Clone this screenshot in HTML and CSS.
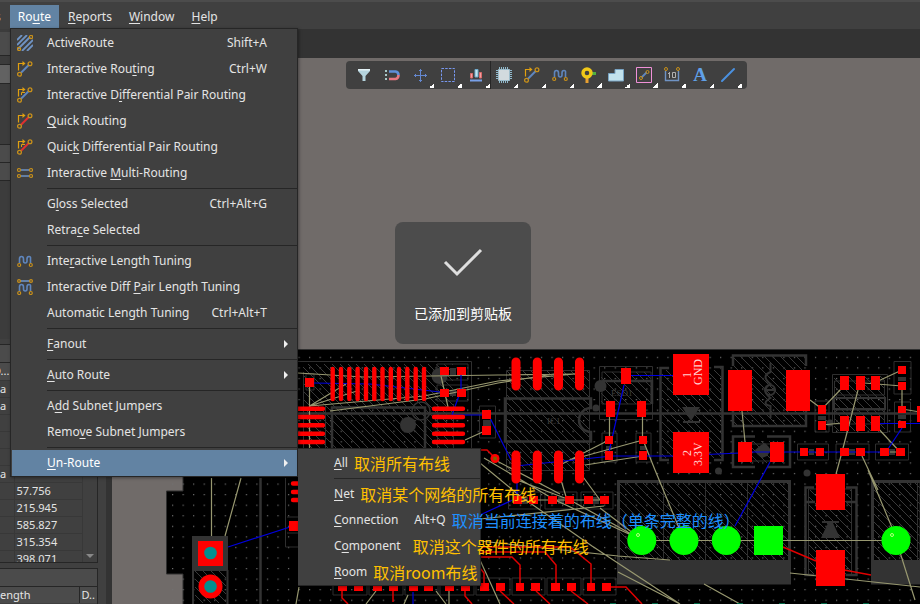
FILE: index.html
```html
<!DOCTYPE html>
<html lang="en">
<head>
<meta charset="utf-8">
<title>PCB Editor</title>
<link rel="stylesheet" href="styles.css">
</head>
<body>
<svg class="defs" aria-hidden="true">
  <defs>
    <symbol id="i-route" viewBox="0 0 16 16"><path d="M1.500 9.500V2.500H6" stroke="#e0a010" stroke-width="1.200"/><path d="M5.500 0l3 2.500-3 2.500z" fill="#e0a010"/><path d="M4 11.700l7.500-7.500" stroke="#5f86bd" stroke-width="2"/><circle cx="2.500" cy="13.200" r="1.900" stroke="#c8901a" stroke-width="1.300"/><circle cx="13" cy="2.800" r="1.900" stroke="#c8901a" stroke-width="1.300"/></symbol>
    <symbol id="i-quick" viewBox="0 0 16 16"><path d="M1.500 9.500V2.500H6" stroke="#e0a010" stroke-width="1.200"/><path d="M5.500 0l3 2.500-3 2.500z" fill="#e0a010"/><path d="M4 11.700l7.500-7.500" stroke="#e03030" stroke-width="2"/><circle cx="2.500" cy="13.200" r="1.900" stroke="#c8901a" stroke-width="1.300"/><circle cx="13" cy="2.800" r="1.900" stroke="#c8901a" stroke-width="1.300"/></symbol>
    <symbol id="i-wave" viewBox="0 0 16 16"><path d="M2.500 10V6q0-2.500 2-2.500T6.500 6V8q0 2 1.750 2T10 8V6q0-2.500 2-2.500T13.500 6V10" stroke="#5f86bd" stroke-width="1.600"/><circle cx="2.200" cy="12" r="1.500" stroke="#c8901a" stroke-width="1.200"/><circle cx="13.800" cy="12" r="1.500" stroke="#c8901a" stroke-width="1.200"/></symbol>
  </defs>
</svg>
<div class="app">
  <nav class="menubar">
    <button class="menubar-item cut">s</button>
    <button class="menubar-item open">Ro<u>u</u>te</button>
    <button class="menubar-item"><u>R</u>eports</button>
    <button class="menubar-item"><u>W</u>indow</button>
    <button class="menubar-item"><u>H</u>elp</button>

    <ul class="menu">
      <li><button><svg class="ico" viewBox="0 0 16 16"><path d="M0 5l5-5M0 10L10 0M1 14L13 2M5 16L16 5M10 16l6-6" stroke="#6f93c4" stroke-width="1.800"/><circle cx="2" cy="14" r="1.600" stroke="#c8901a" stroke-width="1.200"/><circle cx="14" cy="2" r="1.600" stroke="#c8901a" stroke-width="1.200"/></svg><span>ActiveRoute</span><kbd>Shift+A</kbd></button></li>
      <li><button><svg class="ico"><use href="#i-route"/></svg><span>Interactive Rou<u>t</u>ing</span><kbd>Ctrl+W</kbd></button></li>
      <li><button><svg class="ico" viewBox="0 0 16 16"><use href="#i-route"/><path d="M4.500 8V5.500H8" stroke="#e0a010"/></svg><span>Interactive D<u>i</u>fferential Pair Routing</span></button></li>
      <li><button><svg class="ico"><use href="#i-quick"/></svg><span><u>Q</u>uick Routing</span></button></li>
      <li><button><svg class="ico" viewBox="0 0 16 16"><use href="#i-quick"/><path d="M4.500 8V5.500H8" stroke="#e0a010"/></svg><span>Quic<u>k</u> Differential Pair Routing</span></button></li>
      <li><button><svg class="ico" viewBox="0 0 16 16"><path d="M4 5h8M4 11h8" stroke="#6f93c4" stroke-width="1.600"/><g stroke="#c8901a" stroke-width="1.200"><circle cx="2" cy="5" r="1.500"/><circle cx="14" cy="5" r="1.500"/><circle cx="2" cy="11" r="1.500"/><circle cx="14" cy="11" r="1.500"/></g></svg><span>Interactive <u>M</u>ulti-Routing</span></button></li>
      <li class="sep"></li>
      <li><button><span>G<u>l</u>oss Selected</span><kbd>Ctrl+Alt+G</kbd></button></li>
      <li><button><span>Retra<u>c</u>e Selected</span></button></li>
      <li class="sep"></li>
      <li><button><svg class="ico"><use href="#i-wave"/></svg><span>Inte<u>r</u>active Length Tuning</span></button></li>
      <li><button><svg class="ico" viewBox="0 0 16 16"><use href="#i-wave" y="2" width="16" height="16"/><path d="M3 2h10" stroke="#6f93c4" stroke-width="1.600"/><circle cx="2" cy="2" r="1.400" stroke="#c8901a" stroke-width="1.200"/><circle cx="14" cy="2" r="1.400" stroke="#c8901a" stroke-width="1.200"/></svg><span>Interactive Diff <u>P</u>air Length Tuning</span></button></li>
      <li><button><span>Automatic Length Tuning</span><kbd>Ctrl+Alt+T</kbd></button></li>
      <li class="sep"></li>
      <li><button class="more"><span><u>F</u>anout</span></button></li>
      <li class="sep"></li>
      <li><button class="more"><span><u>A</u>uto Route</span></button></li>
      <li class="sep"></li>
      <li><button><span>A<u>d</u>d Subnet Jumpers</span></button></li>
      <li><button><span>Remo<u>v</u>e Subnet Jumpers</span></button></li>
      <li class="sep"></li>
      <li class="parent"><button class="more active"><span><u>U</u>n-Route</span></button>
        <ul class="submenu">
          <li><button><span><u>A</u>ll</span><em>取消所有布线</em></button></li>
          <li class="sep"></li>
          <li><button><span><u>N</u>et</span><em>取消某个网络的所有布线</em></button></li>
          <li><button><span><u>C</u>onnection</span><kbd>Alt+Q</kbd><em class="blue">取消当前连接着的布线（单条完整的线）</em></button></li>
          <li><button class="wide"><span>C<u>o</u>mponent</span><em>取消这个器件的所有布线</em></button></li>
          <li><button><span><u>R</u>oom</span><em>取消room布线</em></button></li>
        </ul>
      </li>
    </ul>
  </nav>

  <div class="workspace">
    <aside class="panel">
      <div class="panel-top">
        <div class="bar"></div>
        <div class="field"></div>
        <div class="blank"></div>
        <div class="bar"></div>
        <div class="bar"></div>
      </div>
      <div class="panel-list">
        <div class="bar"></div>
        <div class="list-body">
          <table>
            <thead><tr><th>D...</th><th></th></tr></thead>
            <tbody>
              <tr><td>a</td><td></td></tr>
              <tr><td>a</td><td></td></tr>
              <tr><td></td><td></td></tr>
              <tr><td></td><td></td></tr>
              <tr><td></td><td></td></tr>
              <tr><td>a</td><td></td></tr>
              <tr><td></td><td>57.756</td></tr>
              <tr><td></td><td>215.945</td></tr>
              <tr><td></td><td>585.827</td></tr>
              <tr><td></td><td>315.354</td></tr>
              <tr><td></td><td>398.071</td></tr>
            </tbody>
          </table>
          <div class="scroll"><i></i></div>
        </div>
      </div>
      <div class="panel-foot">
        <div class="bar"></div>
        <div class="foot-head"><span>ength</span><span class="last">D..</span></div>
      </div>
    </aside>

    <main class="editor">
      <div class="tabs"></div>
      <div class="canvas">
        <svg class="board" viewBox="112 58 808 546" preserveAspectRatio="xMinYMin slice">
          <defs>
            <pattern id="dots" x="172" y="483.500" width="10.540" height="10.560" patternUnits="userSpaceOnUse"><rect width="1.200" height="1.200" fill="#707070"/></pattern>
            <pattern id="hatch" width="8" height="8" patternUnits="userSpaceOnUse"><path d="M-1 -1L9 9M-1 7L1 9M7 -1L9 1" stroke="#3a3a3a" stroke-width="1"/></pattern>
          </defs>
          <path d="M183 349.500H921V605H183V574H166.500V491H183Z" fill="#000" stroke="#303030"/>
          <path d="M167 351H920V604H167Z" fill="url(#dots)"/>

          <g fill="url(#hatch)" stroke="none">
            <path d="M303 364h150v84H303zM507 370h82v100h-82zM601 372h50v32h-50zM662 370h60v88h-60zM733 356h72v70h-72zM834 376h51v55h-51zM738 441h46v22h-46zM620 483h168v78H620zM808 490h44v84h-44zM874 483h46v78h-46zM195 571h31v32h-31z"/>
          </g>
          <g fill="none" stroke="#2f2f2f" stroke-width="1">
            <path d="M298 361.500H471.500V448M303.500 372V448M325.500 404V448M437.500 404V448M453.500 404V448"/>
            <path d="M306 374h8v16h-8zM437 364h31v16h-31zM437 385h31v16h-31zM479.500 406h16v32h-16z"/>
            <path d="M506.500 370.500h83v100h-83zM599.500 366.500h53v53h-53zM602 372h49v32h-49zM602 433h15v29h-15zM636 433h15v29h-15z"/>
            <path d="M815 401h14v31h-14zM832.500 374.500h55v58h-55zM834.500 381h50v14h-50zM834.500 410h50v14h-50zM894 361.500h17V394h-17zM894.500 402h16v30h-16z"/>
            <path d="M797.500 444h31v16h-31zM836 444h33v16h-33zM875.500 444h33v16h-33zM508.500 492h32v17h-32zM545 492h32v17h-32zM581 492h32v17h-32z"/>
            <path d="M333 578h34v17h-34zM369 578h34v17h-34zM405 578h33v17h-33zM440 578h34v17h-34zM476 578h34v17h-34zM512 578h33v17h-33zM547 578h34v17h-34zM583 578h33v17h-33z"/>
            <path d="M285.500 478V547H298M287 517h12v16h-12M663.500 483V560M705.500 483V560M747.500 483V560M917.500 483V560M739 444h45v17h-45zM808.500 489h43v86h-43z"/>
          </g>
          <g fill="none" stroke="#333" stroke-width="2.500">
            <path d="M298 413.500H920M260.500 478V604"/>
            <path d="M332 448V407.500H425V448M505 398.500h86V408a11 11 0 0 0 0 24v9.500h-86zM602 381H652V404"/>
            <path d="M669 368H660.500V460H669M714 367H722.500V460H714M733 366V355.500H806V366M733 411V426H806V411M755 436.500H733V467H755M767 436.500H790V467H767"/>
            <path d="M834 398H885V409H834Z" stroke-width="2"/>
            <path d="M814 487.500H805.500V575H814M846 487.500H856.500V575H846M806 502H815M846 502H856"/>
            <path d="M618.500 481.500h171V583h-171zM872.500 481.500H921V583H872.500z" stroke-width="3"/>
            <path d="M770.500 363V372q-10 4 0 12q-10 6 0 14q-10 6 0 8V418M765 390h11" stroke-width="2"/>
            <circle cx="770" cy="390" r="5" stroke-width="2"/>
            <circle cx="421" cy="411" r="9" stroke-width="1.500"/>
          </g>
          <g fill="#333">
            <path d="M617 560h174v24H617zM871 560h49v24h-49zM682 407h18l-9 14zM683 421h17v2h-17zM821 538h19l-7-15h6v-2h-17v2h6zM192 536h36v35h-36z"/>
            <path d="M193 570V604M227.500 570V604" stroke="#333" stroke-width="2"/>
            <circle cx="408" cy="425" r="8"/><circle cx="439.500" cy="376" r="8"/><circle cx="600.500" cy="386" r="6"/><circle cx="596" cy="408" r="3.500"/><circle cx="830" cy="423" r="3.500"/><circle cx="718.500" cy="471" r="3.500"/><circle cx="807" cy="473" r="3.500"/>
            <path d="M761 445l4-2 3 3 3 4-4 6-5 2-5-4-2-4zM483 420h8v6h-8zM606 446h6v4h-6zM640 446h6v4h-6zM809 449h5v6h-5zM849 449h6v6h-6zM889 449h6v6h-6zM898 377h8v4h-8zM898 415h8v4h-8zM818 416h8v4h-8zM522 497h6v7h-6zM558 497h6v7h-6zM593 497h6v7h-6zM450 368h6v8h-6zM450 390h6v6h-6z"/>
          </g>
          <g class="silk" fill="#404040"><text x="547" y="424">IC1</text><text x="611" y="396">ESD1</text></g>

          <g fill="none" stroke="#989870" stroke-width="1.200">
            <path d="M211.500 478V536M241 478L225 536M299 587L296 604M309.500 386V448M309.500 406L346 384M309.500 406L357 391M309.500 406L424 396L498 381L575 374M298 373L363 377L498 375L575 374M330 411L425 399L498 383L554 374M465 440L487 430M441 376L448 407"/>
            <path d="M609.500 417V436M642.500 417V436M643 440L570 460M643 456L585 465M609 440L562 464M578 470L600 500M558 470L567 500M643 440L655 470L684 540"/>
            <path d="M484 458L555 500L642 540M480 463L520 496L592 546L680 604M495 460L560 494M517 480L570 500L642 540M480 519L604 506M480 541L618 556L670 560M530 500H604M480 560L500 604M618 572L680 604M704 584L740 604M600 508L642 540"/>
            <path d="M642 540.500H896M790 573L920 587M868 470L893 530L915 600M810 400L822 409L842 388M876 382L902 370M864 383L902 386M902 390V407M902 409L920 412M742 411L745 442M858 390L842 452L836 474M876 426L900 452M862 456L878 490M822 425L842 423M890 452H905"/>
            <path d="M376 591L366 604M408 595L404 604M449 590V604M436 591L446 604"/>
          </g>
          <g fill="none" stroke="#0000e0" stroke-width="1.200">
            <path d="M228 547L290 527M314 383L370 384L440 392M461 375V390L452 415H484M490 418L511 460M631 375.500H673M624 385L609 452M516 466L612 456H673L740 453M770 462L735 526M876 423.500H920M902 428L886 452M752 452H890M517 483V498L480 515M413 592V604"/>
          </g>
          <g fill="none" stroke="#e00000" stroke-width="1.500">
            <path d="M783 547L816 561M844 570L871 575M480 450H487L495 458M480 547H570L591 564V583M480 552H545L556 565V583M480 557H512L520 565V583M480 568L484 573V583M500 591L514 604M536 591L550 604M571 591L588 604M607 587H626L642 604M342 591V598L348 604M393 591V602M465 591V596L472 604"/>
          </g>

          <g fill="none" stroke="#f00" stroke-linecap="round">
            <path stroke-width="4.400" d="M332.700 369V399M341 369V399M349.300 369V399M357.600 369V399M366 369V399M374.300 369V399M382.500 369V399M390.800 369V399M399 369V399M407.300 369V399M415.700 369V399M424 369V399"/>
            <path stroke-width="4.400" d="M298 408.700H323M298 417H323M298 425.300H323M298 433.700H323M298 442H323M434 408.700H463M434 417H463M434 425.300H463M434 433.700H463M434 442H463M293 483.500H299M293 492H299M293 500H299"/>
            <path stroke-width="9" d="M516 362V386M537.300 362V386M558.500 362V386M579.500 362V386M516 455V479M537.300 455V479M558.500 455V479M579.500 455V479"/>
          </g>
          <g fill="#f00">
            <path d="M305 378h9v9h-9zM440 367h9v8h-9zM457 367h9v8h-9zM440 389h9v8h-9zM457 389h9v8h-9zM482 410h9v9h-9zM482 426h9v9h-9z"/>
            <path d="M621 368h10v16h-10zM606 401h9v16h-9zM637 401h9v16h-9zM605 436h8v8h-8zM605 451h8v9h-8zM639 436h8v8h-8zM639 451h8v9h-8z"/>
            <path d="M673 354h36v41h-36zM673 432h36v41h-36zM728 370h24v41h-24zM786 370h24v41h-24zM738 442h14v20h-14zM770 442h14v20h-14zM816 474h29v36h-29zM816 550h29v36h-29z"/>
            <path d="M818 405h8v9h-8zM818 421h8v9h-8zM840 376h9v14h-9zM856 376h9v14h-9zM871 376h9v14h-9zM840 416h9v15h-9zM856 416h9v15h-9zM871 416h9v15h-9zM898 366h8v8h-8zM898 382h8v8h-8zM898 406h8v7h-8zM898 421h8v7h-8zM917 406h3v16h-3z"/>
            <path d="M800 448h8v8h-8zM816 448h8v8h-8zM840 448h9v8h-9zM856 448h9v8h-9zM880 448h9v8h-9zM896 448h9v8h-9z"/>
            <path d="M513 496h9v8h-9zM529 496h9v8h-9zM548 496h9v8h-9zM565 496h9v8h-9zM584 496h9v8h-9zM600 496h9v8h-9z"/>
            <path d="M480 583h9v8h-9zM496 583h9v8h-9zM516 583h8v8h-8zM531 583h9v8h-9zM551 583h9v8h-9zM567 583h9v8h-9zM587 583h8v8h-8zM602 583h9v8h-9z"/>
            <path d="M338 583h9v8h-9zM354 583h9v8h-9zM373 583h9v8h-9zM389 583h9v8h-9zM409 583h9v8h-9zM424 583h9v8h-9zM445 583h9v8h-9zM461 583h9v8h-9zM289 521h9v10h-9zM198 541h25v25h-25z"/>
            <circle cx="210.500" cy="586.500" r="12"/><circle cx="495" cy="458.500" r="4.500"/>
          </g>
          <circle cx="495" cy="458.500" r="2" fill="#806000"/>
          <g fill="#009090"><circle cx="210.500" cy="553" r="6.300"/><circle cx="210.500" cy="586.500" r="6.300"/></g>
          <g fill="#0f0"><circle cx="641.800" cy="540.500" r="14.500"/><circle cx="684" cy="540.500" r="14.500"/><circle cx="726.300" cy="540.500" r="14.500"/><path d="M754 526h29v29h-29z"/><circle cx="896" cy="540.500" r="14.500"/></g>
          <g fill="none" stroke="#b8ff80"><circle cx="638" cy="535" r="1.500"/><circle cx="892" cy="535" r="1.500"/></g>
          <path d="M610 603.500h6M652 603.500h6M694 603.500h6M737 603.500h6M779 603.500h6M821 603.500h6M863 603.500h6" stroke="#064"/>
          <g class="pad-name" fill="#ffd0d0">
            <text transform="translate(691 378) rotate(-90)">1</text><text transform="translate(702 385) rotate(-90)">GND</text>
            <text transform="translate(691 456) rotate(-90)">2</text><text transform="translate(702 466) rotate(-90)">3.3V</text>
          </g>
        </svg>

        <div class="toolbar">
          <button aria-label="Filter"><svg class="ico" viewBox="0 0 16 16"><path d="M2 2h12v2l-4.500 5v5h-3V9L2 4z" fill="#b4d4de"/><path d="M2 2h12v1.500H2z" fill="#e4f2f6"/></svg></button>
          <button aria-label="Snap"><svg class="ico" viewBox="0 0 16 16"><path d="M5 4.500h6.500q3 .5 3 3.500" stroke="#5f8fd8" stroke-width="2.600"/><path d="M5 12h6.500q3-.5 3-4" stroke="#e87880" stroke-width="2.600"/><path d="M1 4h2M1 8h2M1 12h2" stroke="#a8c8c8" stroke-width="2"/></svg></button>
          <button class="drop" aria-label="Place"><svg class="ico" viewBox="0 0 16 16"><path d="M8.500 2v13M2 8.500h13M7 3.500h3M3.500 7v3M13.500 7v3M7 13.500h3" stroke="#6488d0" stroke-width="1"/></svg></button>
          <button class="drop" aria-label="Select area"><svg class="ico" viewBox="0 0 16 16"><path d="M1.500 1.500h13v13h-13z" stroke="#7898f0" stroke-dasharray="2.500 1.200"/></svg></button>
          <button class="drop split" aria-label="Align"><svg class="ico" viewBox="0 0 16 16"><path d="M2.500 6.500h2v4.500h-2zM11.500 5.500h2V11h-2z" fill="#f0a0a0" stroke="#d86868"/><path d="M7 2.500h3V10H7z" fill="#c0e4ee" stroke="#70aacc"/><path d="M2 13.500h12" stroke="#78a0e8" stroke-width="2"/></svg></button>
          <button class="drop" aria-label="Component"><svg class="ico" viewBox="0 0 16 16"><path d="M3.500 0v16M5.500 0v16M7.500 0v16M9.500 0v16M11.500 0v16M0 3.500h16M0 5.500h16M0 7.500h16M0 9.500h16M0 11.500h16" stroke="#8fb9cc"/><path d="M2.500 2.500h11v11h-11z" fill="#d2dade" stroke="#9cbccb"/></svg></button>
          <button class="drop" aria-label="Route"><svg class="ico"><use href="#i-route"/></svg></button>
          <button class="drop" aria-label="Tune"><svg class="ico"><use href="#i-wave"/></svg></button>
          <button class="drop" aria-label="Via"><svg class="ico" viewBox="0 0 16 16"><path d="M7 9v7" stroke="#e8a030" stroke-width="3"/><path d="M10 6.500h6" stroke="#50b040" stroke-width="3"/><circle cx="7" cy="6" r="4" stroke="#f0c818" stroke-width="3.400"/></svg></button>
          <button class="drop" aria-label="Polygon"><svg class="ico" viewBox="0 0 16 16"><path d="M.5 14V6.500H7V2.500h8.500V14z" fill="#c2e2ec" stroke="#78a4c4"/></svg></button>
          <button class="drop" aria-label="Room"><svg class="ico" viewBox="0 0 16 16"><path d="M.5.500h15v15H.5z" stroke="#f090d8"/><path d="M5.500 10.500l5-5" stroke="#5f86bd" stroke-width="1.800"/><circle cx="5" cy="11" r="1.500" stroke="#c8901a"/><circle cx="11.500" cy="5" r="1.500" stroke="#c8901a"/></svg></button>
          <button class="drop" aria-label="Dimension"><svg class="ico" viewBox="0 0 16 16"><path d="M1.500 4v9.500h13V4" stroke="#6f93c4" stroke-width="1.400"/><path d="M5.500 5v6M4 6.500h1M8.500 5.500h3v5h-3z" stroke="#b0b0b0"/><circle cx="2" cy="2" r="1.500" stroke="#c8901a"/><circle cx="14" cy="2" r="1.500" stroke="#c8901a"/></svg></button>
          <button class="drop letter" aria-label="Text">A</button>
          <button class="drop" aria-label="Line"><svg class="ico" viewBox="0 0 16 16"><path d="M2 14L14 2" stroke="#4a90e0" stroke-width="2" stroke-linecap="round"/></svg></button>
        </div>

        <div class="toast">
          <svg viewBox="0 0 40 30"><path d="M2 14l12 12L38 2" fill="none" stroke="#dedede" stroke-width="3"/></svg>
          <span>已添加到剪贴板</span>
        </div>
      </div>
    </main>
  </div>
</div>
</body>
</html>
```
FILE: styles.css
```css
* { box-sizing: border-box; }

body {
  margin: 0;
  background: #333;
  color: #e4e4e4;
  font: 12px/16px "Noto Sans", "Noto Sans CJK SC", sans-serif;
}

button {
  border: 0;
  padding: 0;
  background: none;
  color: inherit;
  font: inherit;
}

u { text-underline-offset: 2px; }
.defs { position: absolute; width: 0; height: 0; }
.ico { width: 16px; height: 16px; fill: none; flex: none; }
symbol { fill: none; }

.app {
  display: flex;
  flex-direction: column;
  height: 100vh;
  overflow: hidden;
}

/* Menu bar */
.menubar {
  position: relative;
  z-index: 2;
  display: flex;
  flex: none;
  gap: 1px;
  height: 29px;
  padding-top: 3px;
  background: #404040;
  border-top: 2px solid #4c4c4c;
}
.menubar-item { height: 23px; padding: 0 8px; }
.menubar-item.cut { margin-left: -13px; }
.menubar-item.open { background: #6283a3; color: #fff; }

/* Menus */
.menu, .submenu {
  position: absolute;
  margin: 0;
  padding: 1px 0 0 1px;
  list-style: none;
  background: #404040;
  border: 1px solid #262626;
  box-shadow: 1px 1px 3px rgba(0, 0, 0, .4);
}
.menu { top: 26px; left: 10px; width: 288px; }
.menu button {
  display: flex;
  align-items: center;
  width: 100%;
  height: 26px;
  padding: 0 30px 0 35px;
  text-align: left;
  white-space: nowrap;
}
.menu .ico { margin: 0 14px 0 -30px; }
.menu kbd { margin-left: auto; font: inherit; }
.sep { height: 5px; padding: 2px 0 0 35px; }
.sep::before { content: ""; display: block; height: 1px; background: #262626; }
.more::after {
  content: "";
  margin: 0 -25px 0 auto;
  border: 4px solid transparent;
  border-left-color: #f0f0f0;
}
.menu .active { background: #6283a3; color: #fff; }

.parent { position: relative; }
.submenu { top: -2px; left: 286px; width: 183px; border-left: 0; }
.submenu button { gap: 6px; padding: 0 0 0 35px; }
.submenu button.wide { gap: 12px; }
.submenu kbd { margin-left: 10px; }
.submenu em {
  color: #ffc000;
  font: 16px/20px "Noto Sans CJK SC", sans-serif;
}
.submenu em.blue { color: #1e90ff; }

/* Side panel */
.workspace { display: flex; flex: 1; min-height: 0; }
.panel {
  display: flex;
  flex-direction: column;
  flex: none;
  gap: 5px;
  width: 112px;
  padding-right: 8px;
  background: #404040;
  border-right: 6px solid #333;
}
.panel-top { flex: none; height: 310px; background: #3c3c3c; padding-top: 3px; }
.bar { height: 18px; background: #4b4b4b; border-bottom: 1px solid #262626; }
.panel-top .bar:first-child { height: 24px; }
.field { height: 20px; margin-top: 8px; background: #626262; border: 1px solid #262626; border-left: 0; }
.blank { height: 61px; border-bottom: 1px solid #262626; }
.panel-list {
  display: flex;
  flex-direction: column;
  flex: none;
  height: 219px;
  border: 1px solid #262626;
  border-left: 0;
}
.list-body { display: flex; flex: 1; overflow: hidden; }
.list-body table { flex: 1; border-collapse: collapse; table-layout: fixed; width: 82px; height: 204px; }
.list-body th, .list-body td {
  height: 17px;
  padding: 0 2px;
  border-right: 1px solid #383838;
  border-bottom: 1px solid #383838;
  font-weight: normal;
  font-size: 11px;
  line-height: 16px;
  text-align: left;
}
.list-body th { background: #4b4b4b; padding: 0; }
.list-body th:first-child { width: 14px; text-indent: -7px; }
.list-body td:first-child { padding: 0; }
.scroll { display: flex; align-items: flex-end; width: 14px; padding: 0 3px; }
.scroll i { border: 4px solid transparent; border-top-color: #888; }
.panel-foot { flex: 1; border: 1px solid #262626; border-width: 1px 1px 0 0; }
.foot-head { display: flex; justify-content: space-between; background: #4b4b4b; padding-right: 2px; font-size: 11px; }
.foot-head .last { border-left: 1px solid #262626; padding-left: 2px; }

/* Editor */
.editor { display: flex; flex-direction: column; flex: 1; min-width: 0; }
.tabs { flex: none; height: 29px; background: #333; }
.canvas { position: relative; flex: 1; overflow: hidden; background: #706b69; }
.board { display: block; width: 100%; height: 100%; }
.silk { font: 9px "Liberation Serif", serif; }
.pad-name { font: 12px "Liberation Serif", serif; }

.toolbar {
  position: absolute;
  top: 3px;
  left: 234px;
  display: flex;
  padding: 0 5px 0 4px;
  background: #404040;
  border-radius: 4px;
}
.toolbar button {
  position: relative;
  display: flex;
  align-items: center;
  justify-content: center;
  width: 28px;
  height: 28px;
}
.drop::after {
  content: "";
  position: absolute;
  right: 0;
  bottom: 1px;
  width: 5px;
  height: 5px;
  background: linear-gradient(135deg, transparent 50%, #fff 50%);
}
.toolbar .split { box-shadow: 1px 0 0 #262626; }
.toolbar .letter { color: #60a0e8; font: bold 19px "Liberation Serif", serif; }

.toast {
  position: absolute;
  top: 164px;
  left: 283px;
  display: flex;
  flex-direction: column;
  align-items: center;
  gap: 24px;
  padding: 26px 19px 20px;
  border-radius: 8px;
  background: #4c4c4c;
  color: #fff;
  font: 14px/22px "Noto Sans CJK SC", sans-serif;
}
.toast svg { width: 40px; height: 30px; }
```
